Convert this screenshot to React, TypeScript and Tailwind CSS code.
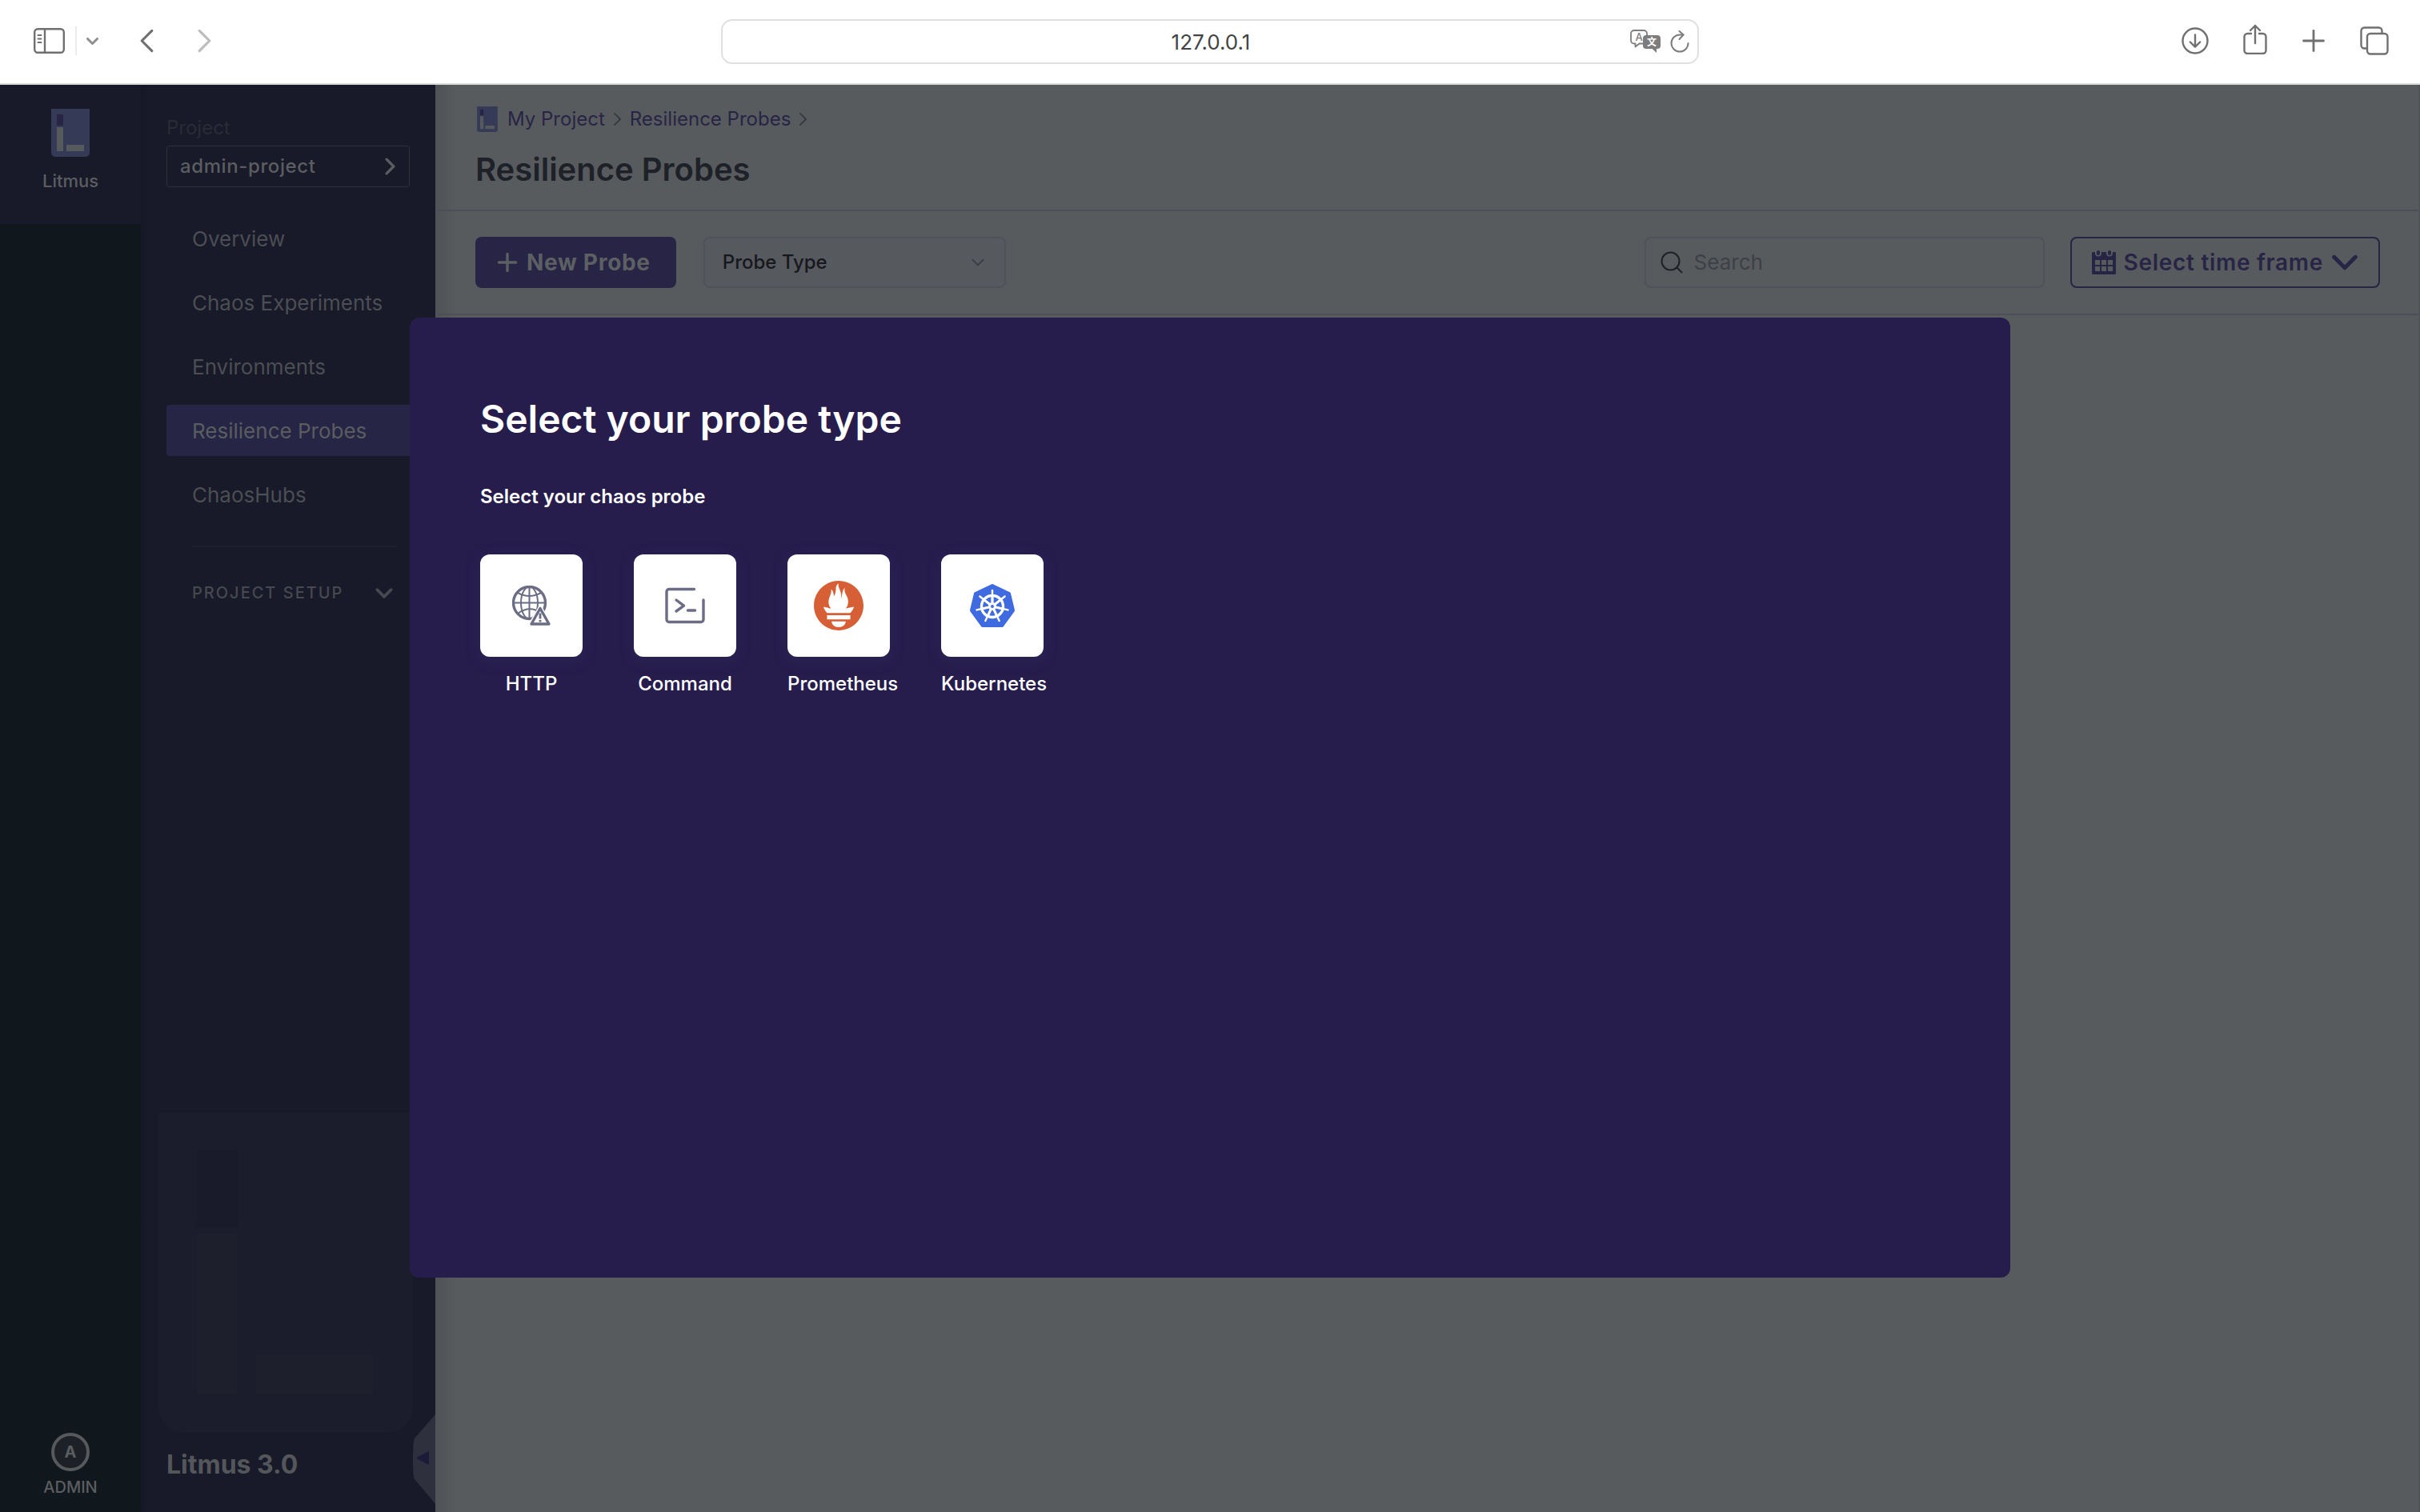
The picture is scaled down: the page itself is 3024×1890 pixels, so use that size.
import React from "react";
import { SiPrometheus } from "react-icons/si";

function LitmusLogo({ className }: { className: string }) {
  return (
    <svg viewBox="0 0 48 60" className={className} aria-hidden="true">
      <path d="M0 0H48V55a5 5 0 0 1-5 5H5a5 5 0 0 1-5-5z" fill="#353a56" />
      <rect x="7" y="7" width="8" height="14" fill="#272446" />
      <rect x="7" y="23" width="8" height="30" fill="#565a5c" />
      <rect x="19" y="45" width="22" height="8" fill="#565a5c" />
    </svg>
  );
}

function Chevron({
  dir,
  className,
  width = 2,
}: {
  dir: "left" | "right" | "down";
  className: string;
  width?: number;
}) {
  const d =
    dir === "left" ? "M9 1L1 9l8 8" : dir === "right" ? "M1 1l8 8-8 8" : "M1 1l8 8 8-8";
  return (
    <svg
      viewBox={dir === "down" ? "-1 -1 20 12" : "-1 -1 12 20"}
      className={className}
      fill="none"
      stroke="currentColor"
      strokeWidth={width}
      strokeLinecap="round"
      strokeLinejoin="round"
      aria-hidden="true"
    >
      <path d={d} />
    </svg>
  );
}

function BrowserBar() {
  return (
    <header className="grid h-[106px] shrink-0 grid-cols-[1fr_minmax(0,1222px)_1fr] items-center border-b-2 border-[#d9dcd9] bg-white text-[#707070]">
      <div className="flex items-center pb-0.5 pl-[42px]">
        <button aria-label="Toggle sidebar">
          <svg viewBox="0 0 40 32" className="h-8 w-10" fill="none" stroke="currentColor" strokeWidth="2.4">
            <rect x="1.2" y="1.2" width="36.6" height="29.6" rx="4" />
            <path d="M14 1v30" />
            <path d="M5.5 9h4M5.5 13.5h4M5.5 18h4" strokeWidth="1.8" strokeLinecap="round" />
          </svg>
        </button>
        <span className="ml-3 h-9 w-0.5 bg-[#ececee]" />
        <button aria-label="Tab groups" className="ml-3 text-[#8e8e93]">
          <Chevron dir="down" className="h-[9px] w-[15px]" width={4} />
        </button>
        <button aria-label="Back" className="ml-[51px]">
          <Chevron dir="left" className="h-8 w-[19px]" />
        </button>
        <button aria-label="Forward" className="ml-[53px] text-[#bcbcbc]">
          <Chevron dir="right" className="h-8 w-[19px]" />
        </button>
      </div>
      <div className="flex h-14 items-center rounded-[14px] border-2 border-[#e0e0e0] pr-2.5">
        <input
          aria-label="Address"
          defaultValue="127.0.0.1"
          className="ml-[86px] min-w-0 flex-1 bg-transparent pt-0.5 text-center text-[26px] leading-8 text-[#444444] outline-none"
        />
        <button aria-label="Translate">
          <svg viewBox="0 0 38 30" className="h-[30px] w-[38px] text-[#7d7d7d]">
            <path
              d="M16 17.5h-4.5L6.5 21.5v-4H5a4 4 0 0 1-4-4V5a4 4 0 0 1 4-4h12a4 4 0 0 1 4 4v2"
              fill="none"
              stroke="currentColor"
              strokeWidth="1.8"
              strokeLinejoin="round"
            />
            <text x="11" y="14" fontSize="13" fontWeight="500" textAnchor="middle" fill="currentColor">
              A
            </text>
            <path
              d="M20 7h14a4 4 0 0 1 4 4v9a4 4 0 0 1-4 4h-1v5l-5.5-5H20a4 4 0 0 1-4-4v-9a4 4 0 0 1 4-4z"
              fill="currentColor"
            />
            <text
              x="27"
              y="20"
              fontSize="12"
              fontWeight="700"
              textAnchor="middle"
              fill="#ffffff"
              className="font-['Noto_Sans_CJK_SC',sans-serif]"
            >
              文
            </text>
          </svg>
        </button>
        <button aria-label="Reload" className="ml-3">
          <svg viewBox="0 0 24 28" className="h-7 w-6 text-[#7d7d7d]" fill="none" stroke="currentColor" strokeWidth="2" strokeLinecap="round" strokeLinejoin="round">
            <path d="M22.5 16a10.5 10.5 0 1 1-10.5-10.5h4.5" />
            <path d="M11.5 1l5 4.500-5 5.500" />
          </svg>
        </button>
      </div>
      <div className="flex items-center justify-end pr-[39px] pb-0.5">
        <button aria-label="Downloads">
          <svg viewBox="0 0 34 34" className="h-[34px] w-[34px]" fill="none" stroke="currentColor" strokeWidth="2.4" strokeLinecap="round" strokeLinejoin="round">
            <circle cx="17" cy="17" r="15.5" />
            <path d="M17 9.5v15M10.8 18.5l6.2 6.2 6.2-6.2" />
          </svg>
        </button>
        <button aria-label="Share" className="ml-[43px]">
          <svg viewBox="0 0 30 38" className="mb-1 h-[38px] w-[30px]" fill="none" stroke="currentColor" strokeWidth="2.4" strokeLinecap="round" strokeLinejoin="round">
            <path d="M10 12H5.5a4 4 0 0 0-4 4v17a4 4 0 0 0 4 4h19a4 4 0 0 0 4-4V16a4 4 0 0 0-4-4H20" />
            <path d="M15 24V2M9 8l6-6 6 6" />
          </svg>
        </button>
        <button aria-label="New tab" className="ml-11">
          <svg viewBox="0 0 28 28" className="h-7 w-7" fill="none" stroke="currentColor" strokeWidth="2.8" strokeLinecap="round">
            <path d="M14 1.5v25M1.5 14h25" />
          </svg>
        </button>
        <button aria-label="Show tabs" className="ml-11">
          <svg viewBox="0 0 36 36" className="h-9 w-9" fill="none" stroke="currentColor" strokeWidth="2.4">
            <path d="M9 27.5H5.5a4 4 0 0 1-4-4V5.5a4 4 0 0 1 4-4h18a4 4 0 0 1 4 4V9" />
            <rect x="9" y="9" width="25.5" height="25.5" rx="4" />
          </svg>
        </button>
      </div>
    </header>
  );
}

function Rail() {
  return (
    <aside className="flex w-44 shrink-0 flex-col items-center bg-[#10171d] text-[#5b5e60]">
      <a href="#home" className="flex h-[174px] w-full flex-col items-center bg-[#181929] pt-[30px]">
        <LitmusLogo className="h-[60px] w-12" />
        <span className="mt-4 text-[22px] leading-7 font-medium">Litmus</span>
      </a>
      <a href="#account" className="mt-auto flex flex-col items-center pb-[19px]">
        <span className="flex h-12 w-12 items-center justify-center rounded-full border-4 border-[#565a5c] bg-[#1e2027] text-xl leading-6 font-bold">
          A
        </span>
        <span className="mt-2 text-xl leading-6 font-medium">ADMIN</span>
      </a>
    </aside>
  );
}

const NAV = ["Overview", "Chaos Experiments", "Environments", "Resilience Probes", "ChaosHubs"];

function Sidebar() {
  return (
    <aside className="relative flex w-[368px] shrink-0 flex-col bg-linear-to-r from-[#161726] to-[#181929] to-[8px] px-8 pt-10 pb-[39px]">
      <span className="text-2xl leading-7 text-[#2a2b36]">Project</span>
      <button className="mt-2 flex h-[52px] items-center justify-between rounded border border-[#30313b] px-4 text-[#5b5e60]">
        <span className="text-2xl leading-8 font-medium tracking-wide">admin-project</span>
        <Chevron dir="right" className="h-[22px] w-[15px]" width={3} />
      </button>
      <nav className="mt-8 -mr-8 flex flex-col gap-4">
        {NAV.map((item) => (
          <a
            key={item}
            href={"#" + item}
            className={
              item === "Resilience Probes"
                ? "flex h-16 items-center rounded-l bg-[#272546] pt-0.5 pl-8 text-[26px] leading-8 text-[#5a5d60]"
                : "flex h-16 items-center pt-0.5 pl-8 text-[26px] leading-8 text-[#4b4e53]"
            }
          >
            {item}
          </a>
        ))}
      </nav>
      <hr className="mt-8 ml-8 w-64 border-t-2 border-[#1e1f2e]" />
      <button className="mt-[43px] ml-8 flex items-center justify-between pr-[21px] text-[#46494f]">
        <span className="text-xl leading-7 font-medium tracking-widest">PROJECT SETUP</span>
        <Chevron dir="down" className="h-[13px] w-[22px]" width={3.4} />
      </button>
      <svg viewBox="0 0 318 400" className="mt-auto -ml-2.5 h-[400px] w-[318px]" aria-hidden="true">
        <path d="M0 0H318V368a32 32 0 0 1-32 32H32a32 32 0 0 1-32-32z" fill="#1b1c2c" />
        <rect x="47" y="47" width="53" height="96" fill="#191a2a" />
        <rect x="48" y="151" width="50" height="200" fill="#1d1f2c" />
        <rect x="122" y="303" width="146" height="48" fill="#1d1f2c" />
      </svg>
      <span className="mt-5 text-[32px] leading-10 font-bold text-[#54575a]">Litmus 3.0</span>
      <button aria-label="Collapse sidebar" className="absolute right-0 bottom-2.5">
        <svg viewBox="0 0 28 112" className="h-28 w-7">
          <path d="M28 0L2 30Q0 34 0 56T2 81L28 112z" fill="#2f303d" />
          <path d="M6 54.5L19 47.5v14z" fill="#1c1b38" stroke="#1c1b38" strokeWidth="2" strokeLinejoin="round" />
        </svg>
      </button>
    </aside>
  );
}

function CalendarIcon() {
  return (
    <svg viewBox="0 0 30 30" className="h-[30px] w-[30px]" aria-hidden="true">
      <path
        fillRule="evenodd"
        fill="currentColor"
        d="M1.5 2H4v1.5a4 4 0 0 0 8 0V2h6v1.5a4 4 0 0 0 8 0V2h2.5A1.5 1.5 0 0 1 30 3.5v25a1.5 1.5 0 0 1-1.5 1.5h-27A1.5 1.5 0 0 1 0 28.5v-25A1.5 1.5 0 0 1 1.5 2zM4 12v6h6v-6zM12 12v6h6v-6zM20 12v6h6v-6zM4 20v6h6v-6zM12 20v6h6v-6zM20 20v6h6v-6z"
      />
      <rect x="6" y="0" width="4" height="6" rx="2" fill="currentColor" />
      <rect x="20" y="0" width="4" height="6" rx="2" fill="currentColor" />
    </svg>
  );
}

function Main() {
  return (
    <main className="flex min-w-0 flex-1 flex-col border-x-2 border-[#505357] bg-linear-to-r from-[#505355] to-[#575b5d] to-[24px]">
      <section className="border-b-2 border-[#4c4f56] px-12 pt-[27px] pb-[26px]">
        <nav aria-label="Breadcrumb" className="flex h-8 items-center text-2xl leading-8 text-[#272446]">
          <LitmusLogo className="ml-0.5 h-8 w-[26px]" />
          <a href="#project" className="ml-3">
            My Project
          </a>
          <Chevron dir="right" className="mx-2.5 h-[18px] w-[11px] text-[#36393e]" />
          <a href="#probes">Resilience Probes</a>
          <Chevron dir="right" className="ml-2.5 h-[18px] w-[11px] text-[#36393e]" />
        </nav>
        <h1 className="mt-[23px] text-[40px] leading-[48px] font-semibold text-[#1e2128]">Resilience Probes</h1>
      </section>
      <section className="flex items-center border-b-2 border-[#4c4f56] px-12 py-8">
        <button className="flex h-16 items-center gap-3 rounded-lg bg-[#272446] pr-8 pl-7 text-[#5d6062]">
          <svg viewBox="0 0 24 24" className="h-6 w-6" fill="none" stroke="currentColor" strokeWidth="3.4" strokeLinecap="round">
            <path d="M12 1.500v21M1.500 12h21" />
          </svg>
          <span className="text-[28px] leading-8 font-bold tracking-wide">New Probe</span>
        </button>
        <div className="relative ml-[34px] w-[378px]">
          <select
            aria-label="Probe Type"
            className="h-16 w-full appearance-none rounded-lg border-2 border-[#4f5259] bg-[#56595e] pl-[22px] text-2xl leading-8 font-medium text-[#16181d]"
          >
            <option>Probe Type</option>
          </select>
          <Chevron dir="down" className="pointer-events-none absolute top-[27px] right-[26px] h-2.5 w-[18px] text-[#393c43]" />
        </div>
        <label className="ml-auto flex h-16 w-[500px] items-center gap-3.5 rounded-lg border-2 border-[#4f5259] pl-[18px]">
          <svg viewBox="0 0 28 28" className="h-7 w-7 text-[#1e2128]" fill="none" stroke="currentColor" strokeWidth="2" strokeLinecap="round" aria-hidden="true">
            <circle cx="12.5" cy="12.5" r="11" />
            <path d="M20.5 20.5l6 6" />
          </svg>
          <input
            type="search"
            aria-label="Search"
            placeholder="Search"
            className="min-w-0 flex-1 bg-transparent text-[26px] leading-8 outline-none placeholder:text-[#3d4147]"
          />
        </label>
        <button className="ml-8 flex h-16 items-center gap-2.5 rounded-lg border-2 border-[#272446] px-[25px] text-[#272446]">
          <CalendarIcon />
          <span className="text-[28px] leading-8 font-semibold tracking-wide">Select time frame</span>
          <Chevron dir="down" className="h-5 w-[34px]" width={3} />
        </button>
      </section>
    </main>
  );
}

function HttpIcon() {
  return (
    <svg viewBox="0 0 48 50" className="h-[50px] w-12" fill="none" stroke="#6b6d85" aria-hidden="true">
      <circle cx="21.5" cy="21.5" r="20" strokeWidth="3.4" />
      <path d="M21.5 2v39M2 21.5h39" strokeWidth="2" />
      <ellipse cx="21.5" cy="21.5" rx="10.5" ry="20" strokeWidth="2" />
      <path d="M7 9q14.500 8 29 0M7 35q14.500-11 29-1" strokeWidth="2" />
      <path d="M35 28.5L23.5 48.5h23z" fill="#ffffff" stroke="#ffffff" strokeWidth="6" strokeLinejoin="round" />
      <path d="M35 28.5L24 48h22z" fill="#ffffff" strokeWidth="3.4" strokeLinejoin="round" />
      <path d="M35 34.5v7M35 43v2.500" strokeWidth="2.8" />
    </svg>
  );
}

function CommandIcon() {
  return (
    <svg viewBox="0 0 50 46" className="h-[46px] w-[50px]" fill="none" stroke="#6b6d85" strokeWidth="3.4" strokeLinecap="round" strokeLinejoin="round" aria-hidden="true">
      <path d="M36.5 2.5H5a3 3 0 0 0-3 3v35a3 3 0 0 0 3 3h40a3 3 0 0 0 3-3V16" />
      <path d="M14 16l9.500 7.200L14 30M28.500 29h9" />
    </svg>
  );
}

function KubernetesIcon() {
  const spokes = [0, 1, 2, 3, 4, 5, 6];
  return (
    <svg viewBox="0 0 56 54" className="h-[54px] w-14" aria-hidden="true">
      <path
        d="M28 2L49 12l5 21-13.800 19H15.800L2 33 7 12z"
        fill="#406be0"
        stroke="#406be0"
        strokeWidth="4"
        strokeLinejoin="round"
      />
      <g stroke="#ffffff" fill="none" strokeLinecap="round">
        <circle cx="28" cy="28" r="13.5" strokeWidth="3.4" />
        {spokes.map((n) => (
          <g key={n} transform={`rotate(${(n * 360) / 7} 28 28)`}>
            <path d="M28 23V8" strokeWidth="2.4" />
            <path d="M28 24V17" strokeWidth="3" />
          </g>
        ))}
        <circle cx="28" cy="28" r="3.5" strokeWidth="3" />
      </g>
    </svg>
  );
}

const PROBES = [
  { name: "HTTP", icon: <HttpIcon /> },
  { name: "Command", icon: <CommandIcon /> },
  { name: "Prometheus", icon: <SiPrometheus className="h-[62px] w-[62px] text-[#d75f35]" /> },
  { name: "Kubernetes", icon: <KubernetesIcon /> },
];

function ProbeDialog() {
  return (
    <div className="fixed inset-0 flex items-center justify-center pt-[104px]">
      <div
        role="dialog"
        aria-labelledby="probe-dialog-title"
        className="h-[1200px] w-[2000px] max-w-full rounded-xl bg-[#261d4d] px-[88px] pt-[99px] text-white"
      >
        <h2 id="probe-dialog-title" className="text-5xl leading-[56px] font-semibold">
          Select your probe type
        </h2>
        <p className="mt-[53px] text-2xl leading-8 font-semibold">Select your chaos probe</p>
        <div className="mt-14 flex gap-16">
          {PROBES.map((p) => (
            <button key={p.name} className="w-32">
              <span className="flex h-32 items-center justify-center rounded-xl bg-white shadow-[0_4px_16px_#2c2553]">
                {p.icon}
              </span>
              <span className="mt-[18px] block text-center text-2xl leading-8 font-medium whitespace-nowrap">
                {p.name}
              </span>
            </button>
          ))}
        </div>
      </div>
    </div>
  );
}

export default function App() {
  return (
    <div className="flex min-h-screen flex-col font-[Inter,sans-serif]">
      <BrowserBar />
      <div className="flex flex-1">
        <Rail />
        <Sidebar />
        <Main />
      </div>
      <ProbeDialog />
    </div>
  );
}
